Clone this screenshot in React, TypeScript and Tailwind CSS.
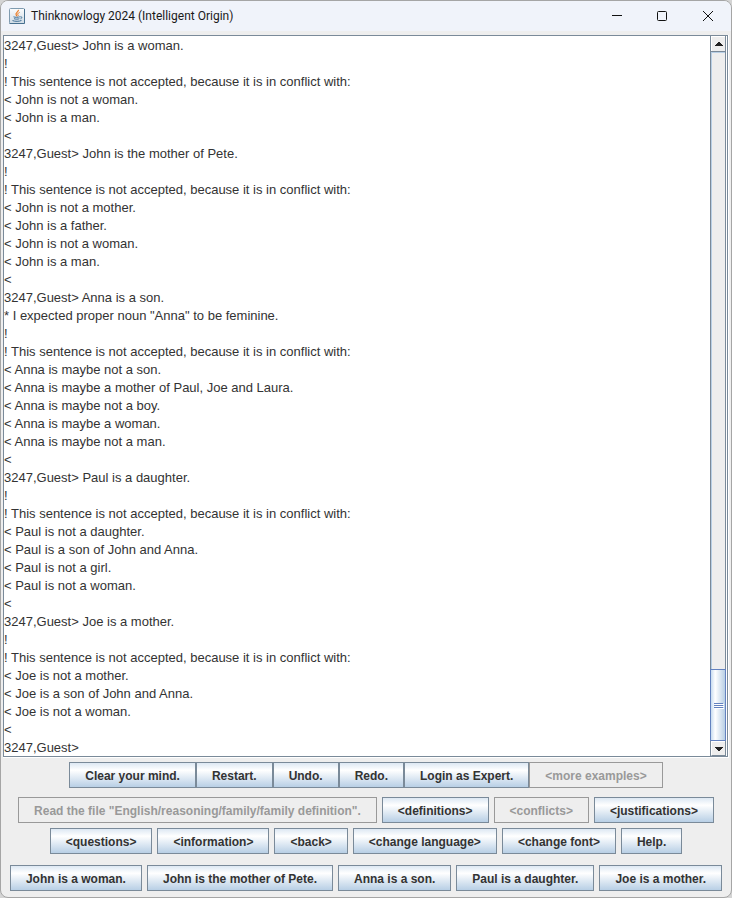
import React from "react";

const transcript = `3247,Guest> John is a woman.
!
! This sentence is not accepted, because it is in conflict with:
< John is not a woman.
< John is a man.
<
3247,Guest> John is the mother of Pete.
!
! This sentence is not accepted, because it is in conflict with:
< John is not a mother.
< John is a father.
< John is not a woman.
< John is a man.
<
3247,Guest> Anna is a son.
* I expected proper noun "Anna" to be feminine.
!
! This sentence is not accepted, because it is in conflict with:
< Anna is maybe not a son.
< Anna is maybe a mother of Paul, Joe and Laura.
< Anna is maybe not a boy.
< Anna is maybe a woman.
< Anna is maybe not a man.
<
3247,Guest> Paul is a daughter.
!
! This sentence is not accepted, because it is in conflict with:
< Paul is not a daughter.
< Paul is a son of John and Anna.
< Paul is not a girl.
< Paul is not a woman.
<
3247,Guest> Joe is a mother.
!
! This sentence is not accepted, because it is in conflict with:
< Joe is not a mother.
< Joe is a son of John and Anna.
< Joe is not a woman.
<
3247,Guest> `;

function MetalButton({ label, disabled = false }: { label: string; disabled?: boolean }) {
  return (
    <button
      type="button"
      disabled={disabled}
      className="h-[26px] whitespace-nowrap border border-[#7a8a99] bg-linear-to-b from-[#dde8f3] via-white via-30% to-[#b8cfe5] px-[15px] pt-px text-xs font-bold text-[#333333] disabled:border-[#999999] disabled:bg-[#eeeeee] disabled:bg-none disabled:text-[#999999]"
    >
      {label}
    </button>
  );
}

function JavaIcon() {
  return (
    <svg width="16" height="16" viewBox="0 0 16 16" fill="none" aria-hidden="true">
      <defs>
        <linearGradient id="tile" x1="0" y1="0" x2="0" y2="1">
          <stop offset="0" stopColor="#fbfcfd" />
          <stop offset="1" stopColor="#cfdbe5" />
        </linearGradient>
      </defs>
      <rect x="0.5" y="0.5" width="15" height="15" rx="1" fill="url(#tile)" stroke="#7f9bb0" />
      <path d="M0.5 15.5h15V1" stroke="#47708f" />
      <path d="M9.4 1.8c.6 2-3.8 2.9-2.2 5.1l.7 1.2" stroke="#ec7a22" strokeWidth="1.2" />
      <path d="M10.6 4.4c-1.8.8-2.5 1.7-1.5 2.7.4.5.1.9-.4 1.2" stroke="#ec7a22" />
      <path d="M4.5 8.8c1.5.7 4.8.6 6.3 0M5 10.7c1.5.6 4 .6 5.4 0M3.5 12.6c2.5 1 6.8 1 9-.2M11.3 8.8c2-.5 2 1.6.2 2" stroke="#3f6f96" />
    </svg>
  );
}

function TitleBar() {
  const control = "flex h-[30px] w-[46px] items-center justify-center";
  return (
    <header className="flex h-[30px] items-center justify-between bg-[#f0f3fa]">
      <div className="flex items-center gap-[6px] pl-2">
        <JavaIcon />
        <h1 className="font-[Roboto,'Noto_Sans',sans-serif] text-xs text-[#1a1a1a]">
          Thinknowlogy 2024 (Intelligent Origin)
        </h1>
      </div>
      <div className="flex">
        <button type="button" aria-label="Minimize" className={control}>
          <svg width="12" height="12" viewBox="0 0 12 12" stroke="#111"><path d="M2 5.5h10" /></svg>
        </button>
        <button type="button" aria-label="Maximize" className={control}>
          <svg width="12" height="12" viewBox="0 0 12 12" fill="none" stroke="#111"><rect x="1.5" y="1.5" width="9" height="9" rx="1" /></svg>
        </button>
        <button type="button" aria-label="Close" className={control}>
          <svg width="12" height="12" viewBox="0 0 12 12" stroke="#111"><path d="M1 1l10 10M11 1L1 11" /></svg>
        </button>
      </div>
    </header>
  );
}

function ScrollBar() {
  const arrow =
    "flex h-[15px] shrink-0 items-center justify-center border-t border-l border-white bg-[#eeeeee]";
  return (
    <div className="flex w-4 shrink-0 flex-col border-x border-[#7a8a99] bg-[#eeeeee]">
      <button type="button" aria-label="Scroll up" className={arrow}>
        <svg width="8" height="4" viewBox="0 0 8 4" fill="#222" shapeRendering="crispEdges"><path d="M3 0h2v1h1v1h1v1h1v1H0V3h1V2h1V1h1z" /></svg>
      </button>
      <div className="flex grow flex-col justify-end border-t border-[#7a8a99] shadow-[inset_1px_1px_0_#b8cfe5]">
        <div className="-mx-px flex h-[72px] flex-col items-center justify-center gap-px border border-[#6382bf] bg-linear-to-r from-[#c8dcf0] via-white via-30% to-[#b8cfe5]">
          <span className="h-px w-[9px] bg-[#6382bf] shadow-[1px_1px_0_white]" />
          <span className="h-px w-[9px] bg-[#6382bf] shadow-[1px_1px_0_white]" />
          <span className="h-px w-[9px] bg-[#6382bf] shadow-[1px_1px_0_white]" />
        </div>
      </div>
      <button type="button" aria-label="Scroll down" className={arrow + " border-b border-b-[#7a8a99]"}>
        <svg width="8" height="4" viewBox="0 0 8 4" fill="#222" shapeRendering="crispEdges"><path d="M0 0h8v1H7v1H6v1H5v1H3V3H2V2H1V1H0z" /></svg>
      </button>
    </div>
  );
}

export default function App() {
  return (
    <div className="bg-[#d4d4d4] font-['Liberation_Sans',Arial,sans-serif]">
      <div className="overflow-hidden rounded-lg border border-[#a5a5a5] bg-[#eeeeee]">
        <TitleBar />
        <main>
          <div className="mx-[2px] mt-1 border-r border-b border-white">
            <div className="flex border border-[#7a8a99] bg-white pr-px">
              <textarea
                aria-label="Conversation"
                spellCheck={false}
                defaultValue={transcript}
                className="block h-[720px] min-w-0 grow resize-none overflow-hidden bg-white pt-px text-[13px] leading-[18px] text-[#333333] outline-none"
              />
              <ScrollBar />
            </div>
          </div>
          <div className="flex flex-col items-center pt-1 pb-[6px]">
            <div className="flex">
              <MetalButton label="Clear your mind." />
              <MetalButton label="Restart." />
              <MetalButton label="Undo." />
              <MetalButton label="Redo." />
              <MetalButton label="Login as Expert." />
              <MetalButton label="<more examples>" disabled />
            </div>
            <div className="mt-[9px] flex flex-wrap justify-center gap-[5px]">
              <MetalButton label={'Read the file "English/reasoning/family/family definition".'} disabled />
              <MetalButton label="<definitions>" />
              <MetalButton label="<conflicts>" disabled />
              <MetalButton label="<justifications>" />
              <MetalButton label="<questions>" />
              <MetalButton label="<information>" />
              <MetalButton label="<back>" />
              <MetalButton label="<change language>" />
              <MetalButton label="<change font>" />
              <MetalButton label="Help." />
            </div>
            <div className="mt-[11px] flex flex-wrap justify-center gap-[5px]">
              <MetalButton label="John is a woman." />
              <MetalButton label="John is the mother of Pete." />
              <MetalButton label="Anna is a son." />
              <MetalButton label="Paul is a daughter." />
              <MetalButton label="Joe is a mother." />
            </div>
          </div>
        </main>
      </div>
    </div>
  );
}
